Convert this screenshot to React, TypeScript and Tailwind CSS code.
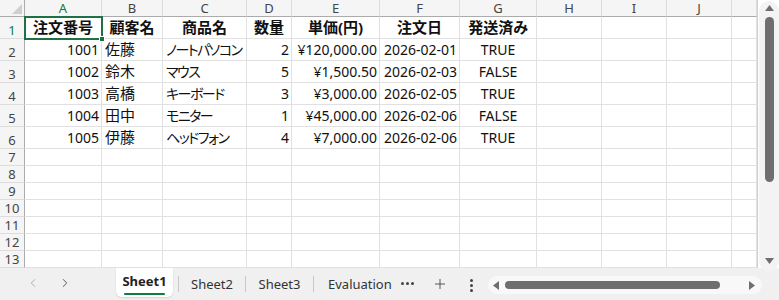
import React from "react";
import { ChevronLeft, ChevronRight, Plus } from "lucide-react";

const cols = ["A", "B", "C", "D", "E", "F", "G", "H", "I", "J", ""];

const headers = ["注文番号", "顧客名", "商品名", "数量", "単価(円)", "注文日", "発送済み"];

const rows = [
    ["1001", "佐藤", "ノートパソコン", "2", "¥120,000.00", "2026-02-01", "TRUE"],
    ["1002", "鈴木", "マウス", "5", "¥1,500.50", "2026-02-03", "FALSE"],
    ["1003", "高橋", "キーボード", "3", "¥3,000.00", "2026-02-05", "TRUE"],
    ["1004", "田中", "モニター", "1", "¥45,000.00", "2026-02-06", "FALSE"],
    ["1005", "伊藤", "ヘッドフォン", "4", "¥7,000.00", "2026-02-06", "TRUE"],
];

const emptyRows = [7, 8, 9, 10, 11, 12, 13];

function DataCell({ value, col }: { value: string; col: number }) {
    const align =
        col === 1
            ? "justify-start pl-[3px] text-[15px]"
            : col === 2
              ? "justify-start pl-[3px] text-[14px] tracking-[-1.5px]"
              : col === 6
                ? "justify-center text-[14px]"
                : "justify-end pr-[2px] text-[14px]";
    return (
        <div className={`flex items-center overflow-visible whitespace-nowrap border-r border-b border-[#e1e1e1] ${align}`}>
            {value}
        </div>
    );
}

function EmptyCells() {
    return (
        <>
            {[0, 1, 2, 3].map((i) => (
                <div key={i} className="border-r border-b border-[#e1e1e1]" />
            ))}
        </>
    );
}

function RowHead({ n, active }: { n: number; active?: boolean }) {
    return (
        <div
            className={`flex items-end justify-center bg-[#f5f5f5] border-r border-r-[#ababab] border-b border-b-[#dcdcdc] text-[13px] leading-[16px] ${
                active ? "text-[#107c41]" : "text-[#444]"
            }`}
        >
            {n}
        </div>
    );
}

export default function App() {
    return (
        <div className="w-[779px] h-[300px] overflow-hidden bg-white text-[#111] font-['Noto_Sans','Noto_Sans_CJK_JP',sans-serif] [font-feature-settings:'palt']">
            <div className="flex h-[268px]">
                <div className="grid grid-cols-[25px_77px_61px_84px_45px_88px_80px_77px_65px_65px_65px_25px] grid-rows-[17px_22px_22px_22px_22px_22px_22px_17px_17px_17px_17px_17px_17px_17px] w-[757px] h-[268px] overflow-hidden">
                    {/* column headers */}
                    <div className="relative bg-[#f5f5f5] border-r border-r-[#ababab] border-b border-b-[#ababab]">
                        <svg className="absolute right-[2px] bottom-[2px]" width="10" height="10" viewBox="0 0 10 10">
                            <polygon points="10,0 10,10 0,10" fill="#cfcfcf" />
                        </svg>
                    </div>
                    {cols.map((c, i) => (
                        <div
                            key={i}
                            className={`flex items-center justify-center bg-[#f5f5f5] border-r border-r-[#dcdcdc] border-b border-b-[#ababab] text-[13px] leading-[16px] ${
                                i === 0 ? "text-[#107c41]" : "text-[#444]"
                            }`}
                        >
                            {c}
                        </div>
                    ))}

                    {/* row 1 */}
                    <RowHead n={1} active />
                    {headers.map((h, i) => (
                        <div
                            key={i}
                            className="relative flex items-center justify-center whitespace-nowrap border-r border-b border-[#e1e1e1] text-[15px] font-bold"
                        >
                            {h}
                            {i === 0 && (
                                <div className="absolute -left-[1px] -top-[1px] -right-[2px] -bottom-[2px] z-10 border-2 border-[#1e7145]">
                                    <div className="absolute -right-[4px] -bottom-[4px] w-[6px] h-[6px] bg-[#1e7145] border border-white" />
                                </div>
                            )}
                        </div>
                    ))}
                    <EmptyCells />

                    {/* rows 2-6 */}
                    {rows.map((r, ri) => (
                        <React.Fragment key={ri}>
                            <RowHead n={ri + 2} />
                            {r.map((v, ci) => (
                                <DataCell key={ci} value={v} col={ci} />
                            ))}
                            <EmptyCells />
                        </React.Fragment>
                    ))}

                    {/* empty rows */}
                    {emptyRows.map((n) => (
                        <React.Fragment key={n}>
                            <RowHead n={n} />
                            {cols.map((_, i) => (
                                <div key={i} className="border-r border-b border-[#e1e1e1]" />
                            ))}
                        </React.Fragment>
                    ))}
                </div>

                {/* vertical scrollbar */}
                <div className="w-[22px] h-[268px] border-l border-[#d0d0d0] bg-white pl-[1px] pt-[1px]">
                    <div className="h-[270px] w-[20px] rounded-full bg-[#f3f3f3] flex flex-col items-center">
                        <svg className="mt-[4px]" width="9" height="6" viewBox="0 0 9 6">
                            <polygon points="4.5,0 9,6 0,6" fill="#6e6e6e" />
                        </svg>
                        <div className="mt-[6px] w-[9px] h-[165px] rounded-full bg-[#6e6e6e]" />
                        <div className="flex-1" />
                        <svg className="mb-[7px]" width="9" height="6" viewBox="0 0 9 6">
                            <polygon points="0,0 9,0 4.5,6" fill="#6e6e6e" />
                        </svg>
                    </div>
                </div>
            </div>

            {/* sheet tab bar */}
            <div className="h-[32px] bg-[#f0f0f0] flex items-start text-[13px] text-[#333]">
                <div className="w-[116px] h-[30px] flex items-center pl-[26px] gap-[18px]">
                    <ChevronLeft size={14} strokeWidth={1.5} className="text-[#a8a8a8]" />
                    <ChevronRight size={14} strokeWidth={1.5} className="text-[#444]" />
                </div>
                <div className="w-[57px] h-[29px] bg-white rounded-b-[6px] shadow-[0_1px_2px_rgba(0,0,0,0.12)] flex flex-col items-center pt-[5px]">
                    <span className="font-bold leading-[16px] text-[#222]">Sheet1</span>
                    <div className="mt-[4px] w-[41px] h-[2px] bg-[#107c41] rounded-full" />
                </div>
                <div className="ml-[5px] mt-[8px] w-[67px] h-[16px] border-l border-[#c8c8c8] flex items-center justify-center leading-none">
                    Sheet2
                </div>
                <div className="mt-[8px] w-[68px] h-[16px] border-l border-[#c8c8c8] flex items-center justify-center leading-none">
                    Sheet3
                </div>
                <div className="mt-[8px] w-[82px] h-[16px] border-l border-[#c8c8c8] flex items-center pl-[14px] leading-none whitespace-nowrap">
                    Evaluation
                </div>
                <div className="mt-[14px] ml-[6px] flex gap-[2px]">
                    <div className="w-[3px] h-[3px] rounded-full bg-[#444]" />
                    <div className="w-[3px] h-[3px] rounded-full bg-[#444]" />
                    <div className="w-[3px] h-[3px] rounded-full bg-[#444]" />
                </div>
                <Plus size={16} strokeWidth={1.2} className="ml-[18px] mt-[8px] text-[#333]" />
                <div className="ml-[22px] mt-[11px] flex flex-col gap-[2px]">
                    <div className="w-[3px] h-[3px] rounded-full bg-[#444]" />
                    <div className="w-[3px] h-[3px] rounded-full bg-[#444]" />
                    <div className="w-[3px] h-[3px] rounded-full bg-[#444]" />
                </div>
                {/* horizontal scrollbar */}
                <div className="ml-[15px] mt-[8px] w-[274px] h-[18px] rounded-full bg-[#f8f8f8] flex items-center pl-[5px] pr-[7px]">
                    <svg width="6" height="9" viewBox="0 0 6 9">
                        <polygon points="6,0 6,9 0,4.5" fill="#6e6e6e" />
                    </svg>
                    <div className="ml-[6px] w-[215px] h-[8px] rounded-full bg-[#6e6e6e]" />
                    <div className="flex-1" />
                    <svg width="6" height="9" viewBox="0 0 6 9">
                        <polygon points="0,0 6,4.5 0,9" fill="#6e6e6e" />
                    </svg>
                </div>
            </div>
        </div>
    );
}
